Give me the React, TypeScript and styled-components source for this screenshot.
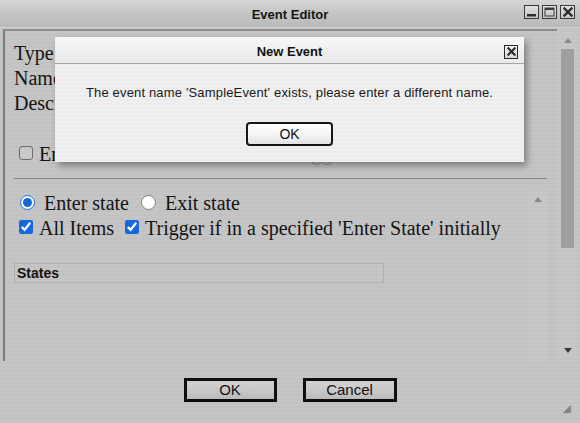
import React from "react";
import styled, { createGlobalStyle } from "styled-components";

const GlobalStyle = createGlobalStyle`
  html, body { margin: 0; padding: 0; }
  body {
    width: 580px;
    height: 423px;
    overflow: hidden;
    background: #c4c4c4;
    font-family: "Liberation Sans", Arial, sans-serif;
  }
`;

const stripes = `repeating-linear-gradient(180deg, #c5c5c5 0px, #c5c5c5 2px, #c2c2c2 2px, #c2c2c2 4px)`;

const Window = styled.div`
  position: relative;
  width: 580px;
  height: 423px;
  display: flex;
  flex-direction: column;
  background: ${stripes};
  overflow: hidden;
`;

const TitleBar = styled.div`
  height: 27px;
  display: grid;
  grid-template-columns: 1fr auto 1fr;
  align-items: center;
  background: linear-gradient(180deg, #d6d6d6 0%, #c6c6c6 45%, #b9b9b9 100%);
  border-bottom: 1px solid #d2d2d2;
`;

const Title = styled.div`
  grid-column: 2;
  font: bold 13px "Liberation Sans", Arial, sans-serif;
  color: #151515;
  padding-top: 1px;
`;

const WinButtons = styled.div`
  grid-column: 3;
  justify-self: end;
  display: flex;
  gap: 3px;
  padding-right: 5px;
  margin-top: -3px;
`;

const WinButton = styled.div`
  width: 13px;
  height: 12px;
  border: 1px solid #3a3a3a;
  background: linear-gradient(180deg, #e2e2e2, #c4c4c4);
  display: flex;
  align-items: center;
  justify-content: center;
`;

const Body = styled.div`
  display: flex;
  height: 332px;
  margin-top: 1px;
`;

const Panel = styled.div`
  flex: 1;
  margin-left: 3px;
  border-top: 2px solid #8d8d8d;
  border-left: 2px solid #7d7d7d;
  display: flex;
  flex-direction: column;
  padding-top: 10px;
  font-family: "Liberation Serif", "Times New Roman", serif;
  font-size: 20px;
  color: #141414;
`;

const FieldLine = styled.div`
  height: 25px;
  line-height: 25px;
  padding-left: 9px;
  white-space: nowrap;
`;

const OptionRow = styled.div<{ $top?: number; $pad?: number }>`
  height: 25px;
  line-height: 25px;
  display: flex;
  align-items: center;
  margin-top: ${(p) => p.$top ?? 0}px;
  padding-left: ${(p) => p.$pad ?? 14}px;
  white-space: nowrap;
`;

const Check = styled.input.attrs({ type: "checkbox" })<{ $gapBefore?: number }>`
  width: 14px;
  height: 14px;
  margin: 0 6px 3px ${(p) => p.$gapBefore ?? 0}px;
  accent-color: #1667dc;
  flex: none;
`;

const EmptyCheck = styled.input.attrs({ type: "checkbox" })`
  appearance: none;
  width: 14px;
  height: 14px;
  margin: 0 6px 3px 0;
  border: 1px solid #6c6c6c;
  border-radius: 3px;
  background: #c9c9c9;
  flex: none;
`;

const LinkIcon = styled.svg`
  align-self: flex-end;
  margin: 0 0 1px 206px;
  flex: none;
`;

const Radio = styled.input.attrs({ type: "radio" })<{ $gapBefore?: number }>`
  width: 15px;
  height: 15px;
  margin: 0 9px 3px ${(p) => p.$gapBefore ?? 0}px;
  accent-color: #1667dc;
  flex: none;
`;

const Rule = styled.div`
  height: 0;
  border-top: 1px solid #838383;
  margin: 11px 10px 0 9px;
`;

const Inner = styled.div`
  flex: 1;
  display: flex;
`;

const InnerContent = styled.div`
  flex: 1;
  padding-top: 12px;
  display: flex;
  flex-direction: column;
`;

const InnerTrack = styled.div`
  width: 19px;
  margin-right: 10px;
  margin-top: 12px;
  background: rgba(255, 255, 255, 0.06);
  display: flex;
  justify-content: center;
  padding-top: 6px;
`;

const StatesHeader = styled.div`
  margin: 22px 0 0 9px;
  width: 366px;
  height: 18px;
  border: 1px solid #aeaeae;
  font: bold 14px "Liberation Sans", Arial, sans-serif;
  color: #111;
  line-height: 18px;
  padding-left: 2px;
  box-sizing: content-box;
`;

const ScrollBar = styled.div`
  width: 21px;
  margin-right: 2px;
  display: flex;
  flex-direction: column;
  align-items: center;
  padding: 9px 0 8px;
  box-sizing: border-box;
  background: rgba(255, 255, 255, 0.04);
`;

const Thumb = styled.div`
  width: 13px;
  height: 199px;
  margin-top: 6px;
  background: #9f9f9f;
`;

const Spacer = styled.div`
  flex: 1;
`;

const Arrow = styled.div<{ $down?: boolean; $color: string }>`
  width: 0;
  height: 0;
  border-left: 4px solid transparent;
  border-right: 4px solid transparent;
  ${(p) =>
    p.$down
      ? `border-top: 5px solid ${p.$color};`
      : `border-bottom: 5px solid ${p.$color};`}
`;

const Footer = styled.div`
  position: relative;
  flex: 1;
  display: flex;
  justify-content: center;
  gap: 26px;
  padding-top: 17px;
`;

const FooterButton = styled.button<{ $w: number }>`
  width: ${(p) => p.$w}px;
  height: 24px;
  box-sizing: border-box;
  border: 3px solid #0e0e0e;
  background: linear-gradient(180deg, #d2d2d2 0%, #c9c9c9 50%, #bbbbbb 100%);
  font: 15px "Liberation Sans", Arial, sans-serif;
  color: #111;
  padding: 0;
  line-height: 16px;
`;

const Grip = styled.svg`
  position: absolute;
  right: 8px;
  bottom: 9px;
`;

const Dialog = styled.div`
  position: absolute;
  left: 55px;
  top: 37px;
  width: 469px;
  height: 125px;
  display: flex;
  flex-direction: column;
  background: repeating-linear-gradient(180deg, #f0f0f0 0px, #f0f0f0 2px, #ececec 2px, #ececec 4px);
  box-shadow: 3px 4px 7px rgba(0, 0, 0, 0.35);
`;

const DialogTitleBar = styled.div`
  height: 26px;
  display: grid;
  grid-template-columns: 1fr auto 1fr;
  align-items: center;
  background: linear-gradient(180deg, #f7f7f7, #e9e9e9);
  border-bottom: 1px solid #a5a5a5;
`;

const DialogTitle = styled.div`
  grid-column: 2;
  font: bold 13px "Liberation Sans", Arial, sans-serif;
  color: #111;
  padding-top: 2px;
`;

const DialogClose = styled.div`
  grid-column: 3;
  justify-self: end;
  margin-right: 6px;
  margin-top: 3px;
  width: 12px;
  height: 12px;
  border: 1px solid #2a2a2a;
  background: linear-gradient(180deg, #f4f4f4, #d8d8d8);
  display: flex;
  align-items: center;
  justify-content: center;
`;

const DialogBody = styled.div`
  flex: 1;
  display: flex;
  flex-direction: column;
  align-items: center;
  padding-top: 21px;
`;

const Message = styled.div`
  font: 13px "Liberation Sans", Arial, sans-serif;
  letter-spacing: 0.16px;
  color: #1a1a1a;
  line-height: 16px;
  white-space: nowrap;
`;

const DialogButton = styled.button`
  margin-top: 21px;
  width: 87px;
  height: 24px;
  box-sizing: border-box;
  border: 2px solid #161616;
  border-radius: 4px;
  background: linear-gradient(180deg, #ffffff 0%, #f6f6f6 50%, #e2e2e2 100%);
  font: 14px "Liberation Sans", Arial, sans-serif;
  color: #111;
  padding: 0;
`;

const XIcon = ({ s = 10 }: { s?: number }) => (
  <svg width={s} height={s} viewBox="0 0 10 10">
    <path d="M1.5 1.5 L8.5 8.5 M8.5 1.5 L1.5 8.5" stroke="#2b2b2b" strokeWidth="2.4" strokeLinecap="square" />
  </svg>
);

export default function App() {
  return (
    <>
      <GlobalStyle />
      <Window>
        <TitleBar>
          <Title>Event Editor</Title>
          <WinButtons>
            <WinButton>
              <svg width="11" height="10" viewBox="0 0 11 10">
                <rect x="1" y="7" width="9" height="2.5" fill="#2e2e2e" />
              </svg>
            </WinButton>
            <WinButton>
              <svg width="11" height="10" viewBox="0 0 11 10">
                <rect x="1" y="1" width="9" height="8" fill="none" stroke="#3a3a3a" strokeWidth="1" />
                <rect x="1" y="1" width="9" height="2" fill="#3a3a3a" />
              </svg>
            </WinButton>
            <WinButton>
              <XIcon s={10} />
            </WinButton>
          </WinButtons>
        </TitleBar>

        <Body>
          <Panel>
            <FieldLine>Type</FieldLine>
            <FieldLine>Name</FieldLine>
            <FieldLine>Description</FieldLine>
            <OptionRow $top={26} $pad={14}>
              <EmptyCheck />
              <span>Enabled</span>
              <LinkIcon width="22" height="12" viewBox="0 0 22 12">
                <circle cx="5.5" cy="6" r="4.5" fill="none" stroke="#8a8a8a" strokeWidth="1.2" />
                <circle cx="16" cy="6" r="4.5" fill="none" stroke="#8a8a8a" strokeWidth="1.2" />
              </LinkIcon>
            </OptionRow>
            <Rule />
            <Inner>
              <InnerContent>
                <OptionRow $pad={15}>
                  <Radio name="st" defaultChecked />
                  <span>Enter state</span>
                  <Radio name="st" $gapBefore={12} />
                  <span>Exit state</span>
                </OptionRow>
                <OptionRow $pad={14}>
                  <Check defaultChecked />
                  <span>All Items</span>
                  <Check defaultChecked $gapBefore={11} />
                  <span>Trigger if in a specified 'Enter State' initially</span>
                </OptionRow>
                <StatesHeader>States</StatesHeader>
              </InnerContent>
              <InnerTrack>
                <Arrow $color="#8a8a8a" />
              </InnerTrack>
            </Inner>
          </Panel>
          <ScrollBar>
            <Arrow $color="#8a8a8a" />
            <Thumb />
            <Spacer />
            <Arrow $down $color="#3a3a3a" />
          </ScrollBar>
        </Body>

        <Footer>
          <FooterButton $w={93}>OK</FooterButton>
          <FooterButton $w={94}>Cancel</FooterButton>
          <Grip width="9" height="9" viewBox="0 0 9 9">
            <path d="M8 1 L1 8 M8 3.5 L3.5 8 M8 6 L6 8" stroke="#6e6e6e" strokeWidth="1.2" />
          </Grip>
        </Footer>

        <Dialog>
          <DialogTitleBar>
            <DialogTitle>New Event</DialogTitle>
            <DialogClose>
              <XIcon s={9} />
            </DialogClose>
          </DialogTitleBar>
          <DialogBody>
            <Message>The event name 'SampleEvent' exists, please enter a different name.</Message>
            <DialogButton>OK</DialogButton>
          </DialogBody>
        </Dialog>
      </Window>
    </>
  );
}
